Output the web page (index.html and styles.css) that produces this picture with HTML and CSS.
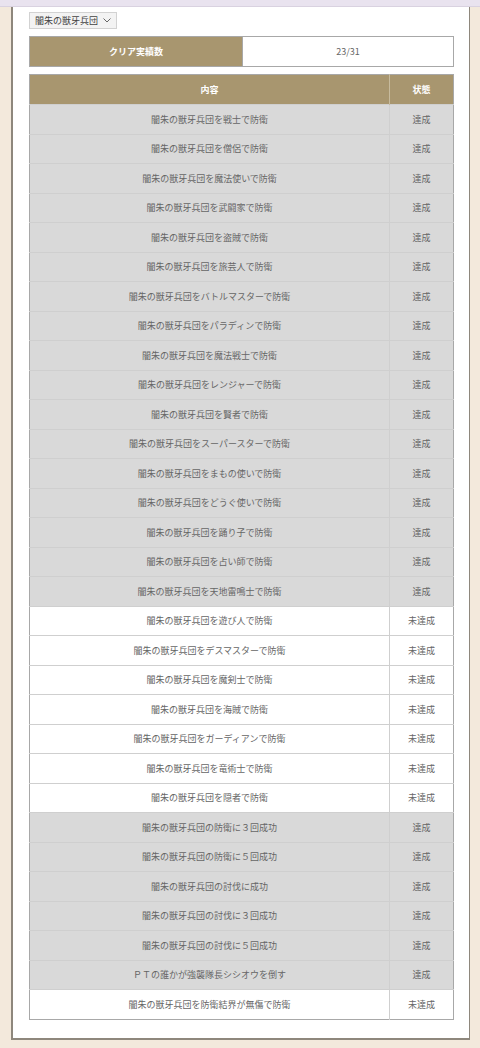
FILE: index.html
```html
<!DOCTYPE html>
<html lang="ja">
<head>
<meta charset="utf-8">
<link rel="stylesheet" href="styles.css">
</head>
<body>
<div class="topbar"></div>
<div class="panel">
  <div class="select">闇朱の獣牙兵団 <svg class="chev" width="8" height="5" viewBox="0 0 8 5"><path d="M0.5 0.5 L4 4 L7.5 0.5" fill="none" stroke="#666" stroke-width="1"/></svg></div>
  <table class="summary">
    <tr><th>クリア実績数</th><td>23/31</td></tr>
  </table>
  <table class="list">
    <thead><tr><th class="c1">内容</th><th class="c2">状態</th></tr></thead>
    <tbody>
      <tr class="done"><td>闇朱の獣牙兵団を戦士で防衛</td><td>達成</td></tr>
      <tr class="done"><td>闇朱の獣牙兵団を僧侶で防衛</td><td>達成</td></tr>
      <tr class="done"><td>闇朱の獣牙兵団を魔法使いで防衛</td><td>達成</td></tr>
      <tr class="done"><td>闇朱の獣牙兵団を武闘家で防衛</td><td>達成</td></tr>
      <tr class="done"><td>闇朱の獣牙兵団を盗賊で防衛</td><td>達成</td></tr>
      <tr class="done"><td>闇朱の獣牙兵団を旅芸人で防衛</td><td>達成</td></tr>
      <tr class="done"><td>闇朱の獣牙兵団をバトルマスターで防衛</td><td>達成</td></tr>
      <tr class="done"><td>闇朱の獣牙兵団をパラディンで防衛</td><td>達成</td></tr>
      <tr class="done"><td>闇朱の獣牙兵団を魔法戦士で防衛</td><td>達成</td></tr>
      <tr class="done"><td>闇朱の獣牙兵団をレンジャーで防衛</td><td>達成</td></tr>
      <tr class="done"><td>闇朱の獣牙兵団を賢者で防衛</td><td>達成</td></tr>
      <tr class="done"><td>闇朱の獣牙兵団をスーパースターで防衛</td><td>達成</td></tr>
      <tr class="done"><td>闇朱の獣牙兵団をまもの使いで防衛</td><td>達成</td></tr>
      <tr class="done"><td>闇朱の獣牙兵団をどうぐ使いで防衛</td><td>達成</td></tr>
      <tr class="done"><td>闇朱の獣牙兵団を踊り子で防衛</td><td>達成</td></tr>
      <tr class="done"><td>闇朱の獣牙兵団を占い師で防衛</td><td>達成</td></tr>
      <tr class="done"><td>闇朱の獣牙兵団を天地雷鳴士で防衛</td><td>達成</td></tr>
      <tr><td>闇朱の獣牙兵団を遊び人で防衛</td><td>未達成</td></tr>
      <tr><td>闇朱の獣牙兵団をデスマスターで防衛</td><td>未達成</td></tr>
      <tr><td>闇朱の獣牙兵団を魔剣士で防衛</td><td>未達成</td></tr>
      <tr><td>闇朱の獣牙兵団を海賊で防衛</td><td>未達成</td></tr>
      <tr><td>闇朱の獣牙兵団をガーディアンで防衛</td><td>未達成</td></tr>
      <tr><td>闇朱の獣牙兵団を竜術士で防衛</td><td>未達成</td></tr>
      <tr><td>闇朱の獣牙兵団を隠者で防衛</td><td>未達成</td></tr>
      <tr class="done"><td>闇朱の獣牙兵団の防衛に３回成功</td><td>達成</td></tr>
      <tr class="done"><td>闇朱の獣牙兵団の防衛に５回成功</td><td>達成</td></tr>
      <tr class="done"><td>闇朱の獣牙兵団の討伐に成功</td><td>達成</td></tr>
      <tr class="done"><td>闇朱の獣牙兵団の討伐に３回成功</td><td>達成</td></tr>
      <tr class="done"><td>闇朱の獣牙兵団の討伐に５回成功</td><td>達成</td></tr>
      <tr class="done"><td>ＰＴの誰かが強襲隊長シシオウを倒す</td><td>達成</td></tr>
      <tr><td>闇朱の獣牙兵団を防衛結界が無傷で防衛</td><td>未達成</td></tr>
    </tbody>
  </table>
</div>
</body>
</html>
```

FILE: styles.css
```css
html, body {
  margin: 0;
  padding: 0;
}
body {
  background: #f3e9dc;
  font-family: "Noto Sans CJK JP", "Noto Sans", sans-serif;
  color: #666;
  height: 1048px;
}
.topbar {
  height: 6px;
  background: #e9e3ef;
  border-bottom: 1px solid #d9d2e0;
}
.panel {
  margin-left: 11px;
  width: 459px;
  background: #fff;
  border-left: 2px solid #8e877c;
  border-right: 1px solid #8e877c;
  border-bottom: 2px solid #8e877c;
  padding: 5px 17px 18px 16px;
  box-sizing: border-box;
}
.select {
  display: flex;
  width: fit-content;
  align-items: center;
  gap: 5px;
  height: 17px;
  padding: 0 5px;
  box-sizing: border-box;
  background: #f3f3f3;
  border: 1px solid #d2d2d2;
  font-size: 9px;
  color: #444;
}
.chev {
  display: block;
}
table {
  border-collapse: collapse;
  width: 425px;
  font-size: 9px;
}
.summary {
  margin-top: 7px;
  border: 1px solid #a8a8a8;
}
.summary th {
  width: 212px;
  height: 29px;
  background: #a8966f;
  color: #fff;
  font-weight: bold;
  border-right: 1px solid #a8a8a8;
  padding: 0;
}
.summary td {
  text-align: center;
  background: #fff;
  padding: 0;
}
.list {
  margin-top: 7px;
  border: 1px solid #a8a8a8;
}
.list th {
  height: 29px;
  background: #a8966f;
  color: #fff;
  font-weight: bold;
  padding: 0;
}
.list th.c2 {
  width: 63px;
  border-left: 1px solid #c7bb9e;
}
.list td {
  height: 28.5px;
  padding: 0;
  text-align: center;
  border-top: 1px solid #cfcfcf;
  background: #fff;
}
.list td + td {
  border-left: 1px solid #cfcfcf;
}
.list tr.done td {
  background: #d9d9d9;
}
```
